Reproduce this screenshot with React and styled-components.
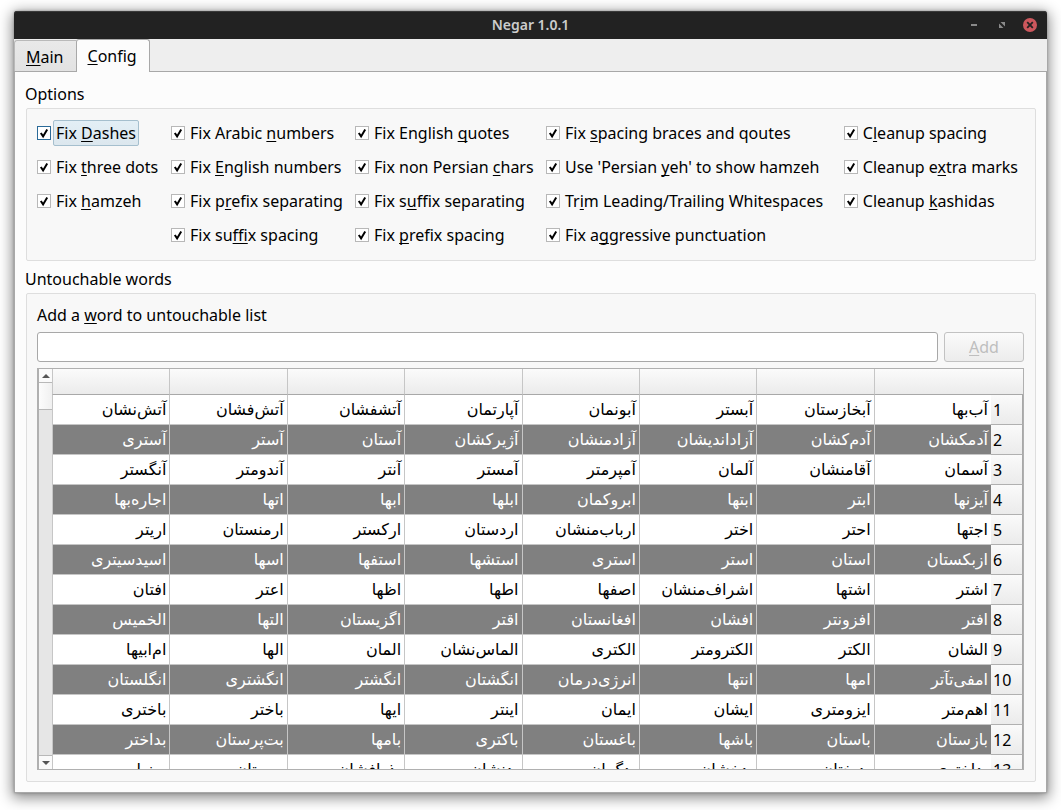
import React from "react";
import styled, { createGlobalStyle, css } from "styled-components";

const GlobalStyle = createGlobalStyle`
  *, *::before, *::after { box-sizing: border-box; }
  body {
    margin: 0;
    background: #fff;
    color: #000;
    font: 16px/22px "Noto Sans", "DejaVu Sans", sans-serif;
  }
  button, input { font: inherit; }
`;

const Desktop = styled.div`
  height: 100vh;
  min-height: 560px;
  padding: 11px 14px 17px;
  overflow: hidden;
`;

const Window = styled.main`
  display: flex;
  flex-direction: column;
  height: 100%;
  border-radius: 3px 3px 0 0;
  background: #eee;
  box-shadow: 0 0 3px rgba(0, 0, 0, 0.3), 0 3px 14px 2px rgba(0, 0, 0, 0.45);
`;

const TitleBar = styled.header`
  display: grid;
  grid-template-columns: 1fr auto 1fr;
  align-items: center;
  flex: none;
  height: 28px;
  border-radius: 3px 3px 0 0;
  background: #222;
  box-shadow: inset 0 1px #3a3a3a;
`;

const Title = styled.h1`
  grid-column: 2;
  margin: 0;
  color: #ccc;
  font-size: 14px;
  line-height: 20px;
  font-weight: 600;
`;

const WindowControls = styled.div`
  display: flex;
  justify-content: flex-end;
  gap: 14px;
  padding-right: 10px;
`;

const ControlButton = styled.button`
  display: block;
  width: 14px;
  height: 14px;
  padding: 0;
  border: 0;
  background: none;
  svg { display: block; }
`;

const TabBar = styled.div`
  display: flex;
  align-items: flex-end;
  flex: none;
  height: 33px;
  border-bottom: 1px solid #a8a8a8;
`;

const Tab = styled.button`
  height: 31px;
  padding: 2px 12px 0 11px;
  border: 1px solid #b9b9b9;
  border-bottom: 0;
  border-right: 0;
  border-radius: 3px 0 0 0;
  background: linear-gradient(#e9e9e9, #e2e2e2);
  color: #000;
  ${(p) =>
    p.$active &&
    css`
      height: 33px;
      margin-bottom: -1px;
      padding: 0 12px 0 11px;
      border-color: #a8a8a8;
      border-right: 1px solid #a8a8a8;
      border-radius: 3px 3px 0 0;
      background: #fcfcfc;
    `}
`;

const Page = styled.div`
  display: flex;
  flex-direction: column;
  flex: 1;
  min-height: 0;
  padding: 11px 10px 10px 11px;
  border: solid #a8a8a8;
  border-width: 0 1px 1px;
  background: #fcfcfc;
`;

const GroupTitle = styled.h2`
  flex: none;
  margin: 0 0 3px -1px;
  font-size: 16px;
  line-height: 22px;
  font-weight: 400;
`;

const OptionsGroup = styled.section`
  display: grid;
  grid-template-columns: 124px 174px 181px 1fr auto;
  grid-auto-rows: 26px;
  gap: 8px 10px;
  flex: none;
  margin-bottom: 7px;
  padding: 11px 14px 12px 10px;
  border: 1px solid #dedede;
  border-radius: 2px;
  background: #f8f8f8;
`;

const Option = styled.label`
  display: flex;
  align-items: center;
  grid-column: ${(p) => p.$column};
  white-space: nowrap;
`;

const Tick = styled.input`
  appearance: none;
  flex: none;
  width: 14px;
  height: 14px;
  margin: 0 2px 0 0;
  border: 1px solid ${(p) => (p.$focused ? "#2a6a98" : "#b8b8b8")};
  background: #fff;
  &:checked {
    background: #fff
      url("data:image/svg+xml,%3Csvg xmlns='http://www.w3.org/2000/svg' viewBox='0 0 12 12'%3E%3Cpath d='M2.8 6 5.1 9.4 9.2 2.6' fill='none' stroke='%23000' stroke-width='2'/%3E%3C/svg%3E");
  }
`;

const OptionText = styled.span`
  padding: 1px 2px;
  border: 1px solid transparent;
  border-radius: 2px;
  ${(p) =>
    p.$focused &&
    css`
      border-color: #a5bfce;
      background: linear-gradient(#e3eff6, #dce7ee);
    `}
`;

const WordsGroup = styled.section`
  display: flex;
  flex-direction: column;
  flex: 1;
  min-height: 0;
  padding: 10px 11px 11px 10px;
  border: 1px solid #dedede;
  border-radius: 2px;
  background: #f8f8f8;
`;

const FieldLabel = styled.label`
  flex: none;
  margin-bottom: 6px;
`;

const AddRow = styled.form`
  display: flex;
  gap: 6px;
  flex: none;
  margin-bottom: 6px;
`;

const WordInput = styled.input`
  flex: 1;
  min-width: 0;
  height: 30px;
  padding: 0 6px;
  border: 1px solid #a8a8a8;
  border-radius: 3px;
  outline: 0;
  background: #fff;
`;

const AddButton = styled.button`
  width: 80px;
  height: 30px;
  padding: 0;
  border: 1px solid #c2c2c2;
  border-radius: 3px;
  background: linear-gradient(#fafafa, #ececec);
  color: #bebebe;
`;

const TableFrame = styled.div`
  display: flex;
  flex: 1;
  min-height: 0;
  border: 1px solid #b0b0b0;
  background: #fff;
  overflow: hidden;
`;

const ScrollBar = styled.div`
  display: flex;
  flex-direction: column;
  flex: none;
  width: 14px;
  border-left: 1px solid #b0b0b0;
  background: #e6e6e6;
`;

const ScrollArrow = styled.button`
  display: grid;
  place-items: center;
  flex: none;
  height: 14px;
  padding: 0;
  border: solid #b8b8b8;
  border-width: ${(p) => (p.$end ? "1px 0 0" : "0 0 1px")};
  background: #fafafa;
`;

const ScrollThumb = styled.div`
  height: 27px;
  border-bottom: 1px solid #b8b8b8;
  background: linear-gradient(90deg, #fcfcfc, #f0f0f0);
`;

const ScrollTrack = styled.div`
  flex: 1;
`;

const WordTable = styled.table`
  flex: 1;
  align-self: flex-start;
  width: 0;
  table-layout: fixed;
  border-collapse: separate;
  border-spacing: 0;
`;

const IndexCol = styled.col`
  width: 32px;
`;

const ColumnHead = styled.th`
  height: 26px;
  padding: 0;
  border-bottom: 1px solid #a8a8a8;
  border-left: 1px solid #c6c6c6;
  background: linear-gradient(#fbfbfb, #ebebeb);
`;

const WordRow = styled.tr`
  background: ${(p) => (p.$alternate ? "#808080" : "#fff")};
  color: ${(p) => (p.$alternate ? "#fff" : "#000")};
`;

const RowHead = styled.th`
  height: 30px;
  padding: 0 2px;
  border-bottom: 1px solid #b0b0b0;
  border-right: 1px solid #a8a8a8;
  background: linear-gradient(#fafafa, #ebebeb);
  color: #000;
  font-weight: 400;
  text-align: left;
`;

const WordCell = styled.td`
  height: 30px;
  padding: 0 3px;
  border-bottom: 1px solid #c6c6c6;
  border-left: 1px solid #c6c6c6;
  white-space: nowrap;
  font-family: "DejaVu Sans", sans-serif;
`;

const Mnemonic = styled.span`
  text-decoration: underline;
  text-decoration-thickness: 1px;
  text-underline-offset: 2px;
  text-decoration-skip-ink: none;
`;

/* An ampersand marks the letter that carries the keyboard shortcut. */
function Caption({ text }) {
  const at = text.indexOf("&");
  return (
    <>
      {text.slice(0, at)}
      <Mnemonic>{text[at + 1]}</Mnemonic>
      {text.slice(at + 2)}
    </>
  );
}

const options = [
  [1, "Fix &Dashes"],
  [2, "Fix Arabic &numbers"],
  [3, "Fix English &quotes"],
  [4, "Fix &spacing braces and qoutes"],
  [5, "C&leanup spacing"],
  [1, "Fix &three dots"],
  [2, "Fix &English numbers"],
  [3, "Fix non Persian &chars"],
  [4, "Use 'Persian &yeh' to show hamzeh"],
  [5, "Cleanup e&xtra marks"],
  [1, "Fix &hamzeh"],
  [2, "Fix p&refix separating"],
  [3, "Fix s&uffix separating"],
  [4, "Tr&im Leading/Trailing Whitespaces"],
  [5, "Cleanup &kashidas"],
  [2, "Fix su&ffix spacing"],
  [3, "Fix &prefix spacing"],
  [4, "Fix a&ggressive punctuation"],
];

const words = [
  ["آب‌بها", "آبخازستان", "آبستر", "آبونمان", "آپارتمان", "آتشفشان", "آتش‌فشان", "آتش‌نشان"],
  ["آدمکشان", "آدم‌کشان", "آزاداندیشان", "آزادمنشان", "آژیرکشان", "آستان", "آستر", "آستری"],
  ["آسمان", "آقامنشان", "آلمان", "آمپرمتر", "آمستر", "آنتر", "آندومتر", "آنگستر"],
  ["آیزنها", "ابتر", "ابتها", "ابروکمان", "ابلها", "ابها", "اتها", "اجاره‌بها"],
  ["اجتها", "احتر", "اختر", "ارباب‌منشان", "اردستان", "ارکستر", "ارمنستان", "اریتر"],
  ["ازبکستان", "استان", "استر", "استری", "استشها", "استفها", "اسها", "اسیدسیتری"],
  ["اشتر", "اشتها", "اشراف‌منشان", "اصفها", "اطها", "اظها", "اعتر", "افتان"],
  ["افتر", "افزونتر", "افشان", "افغانستان", "اقتر", "اگزیستان", "التها", "الخمیس"],
  ["الشان", "الکتر", "الکترومتر", "الکتری", "الماس‌نشان", "المان", "الها", "ام‌ابیها"],
  ["امفی‌تآتر", "امها", "انتها", "انرژی‌درمان", "انگشتان", "انگشتر", "انگشتری", "انگلستان"],
  ["اهم‌متر", "ایزومتری", "ایشان", "ایمان", "اینتر", "ایها", "باختر", "باختری"],
  ["بازستان", "باستان", "باشها", "باغستان", "باکتری", "بامها", "بت‌پرستان", "بداختر"],
  ["بداختری", "بدبختان", "بدخشان", "بدگمان", "بدنشان", "بذرافشان", "برستان", "برنها"],
];

export default function App() {
  return (
    <>
      <GlobalStyle />
      <Desktop>
        <Window>
          <TitleBar>
            <Title>Negar 1.0.1</Title>
            <WindowControls>
              <ControlButton aria-label="Minimize">
                <svg width="14" height="14"><path d="M4 6h6v2H4z" fill="#8a8a8a" /></svg>
              </ControlButton>
              <ControlButton aria-label="Maximize">
                <svg width="14" height="14"><path d="M5.5 4H10v4.5zM4 5.5V10h4.5z" fill="#8a8a8a" /></svg>
              </ControlButton>
              <ControlButton aria-label="Close">
                <svg width="14" height="14">
                  <circle cx="7" cy="7" r="7" fill="#cc575d" />
                  <path d="m4.2 4.2 5.6 5.6m0-5.6-5.6 5.6" stroke="#222" strokeWidth="1.8" />
                </svg>
              </ControlButton>
            </WindowControls>
          </TitleBar>
          <TabBar role="tablist">
            <Tab role="tab" aria-selected="false"><Caption text="&Main" /></Tab>
            <Tab role="tab" aria-selected="true" $active><Caption text="&Config" /></Tab>
          </TabBar>
          <Page role="tabpanel">
            <GroupTitle>Options</GroupTitle>
            <OptionsGroup>
              {options.map(([column, text], i) => (
                <Option key={text} $column={column}>
                  <Tick type="checkbox" defaultChecked $focused={i === 0} />
                  <OptionText $focused={i === 0}><Caption text={text} /></OptionText>
                </Option>
              ))}
            </OptionsGroup>
            <GroupTitle>Untouchable words</GroupTitle>
            <WordsGroup>
              <FieldLabel htmlFor="word"><Caption text="Add a &word to untouchable list" /></FieldLabel>
              <AddRow>
                <WordInput id="word" type="text" />
                <AddButton type="button" disabled><Caption text="&Add" /></AddButton>
              </AddRow>
              <TableFrame>
                <ScrollBar>
                  <ScrollArrow aria-label="Scroll up">
                    <svg width="8" height="4"><path d="M0 4 4 0l4 4z" fill="#555" /></svg>
                  </ScrollArrow>
                  <ScrollThumb />
                  <ScrollTrack />
                  <ScrollArrow aria-label="Scroll down" $end>
                    <svg width="8" height="4"><path d="M0 0h8L4 4z" fill="#555" /></svg>
                  </ScrollArrow>
                </ScrollBar>
                <WordTable dir="rtl">
                  <colgroup>
                    <IndexCol />
                    <col span={8} />
                  </colgroup>
                  <thead>
                    <tr>
                      <ColumnHead colSpan={2} />
                      {words[0].slice(1).map((word) => (
                        <ColumnHead key={word} />
                      ))}
                    </tr>
                  </thead>
                  <tbody>
                    {words.map((row, r) => (
                      <WordRow key={r} $alternate={r % 2 === 1}>
                        <RowHead scope="row">{r + 1}</RowHead>
                        {row.map((word) => (
                          <WordCell key={word}>{word}</WordCell>
                        ))}
                      </WordRow>
                    ))}
                  </tbody>
                </WordTable>
              </TableFrame>
            </WordsGroup>
          </Page>
        </Window>
      </Desktop>
    </>
  );
}
